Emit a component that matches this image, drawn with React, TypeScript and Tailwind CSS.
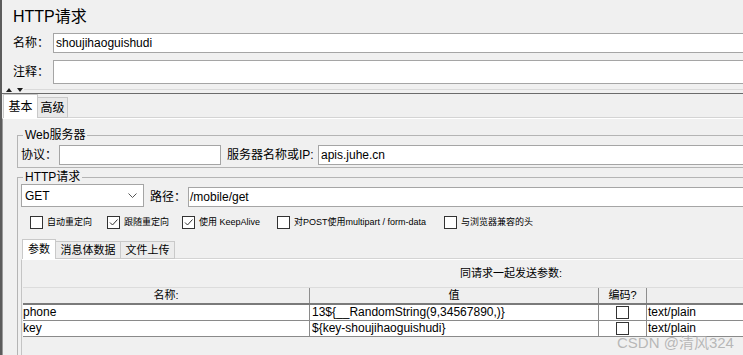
import React from 'react'

const FONT = "font-['Liberation_Sans','Noto_Sans_CJK_SC',sans-serif]"

function CheckBox({ checked = false }: { checked?: boolean }) {
  return (
    <span className="w-[13px] h-[13px] border border-[#333333] bg-white flex items-center justify-center shrink-0">
      {checked && (
        <svg width="11" height="11" viewBox="0 0 11 11">
          <polyline points="2,5.5 4.5,8 9.5,2.5" fill="none" stroke="#333333" strokeWidth="1" />
        </svg>
      )}
    </span>
  )
}

function Option({ label, checked, width }: { label: string; checked?: boolean; width: string }) {
  return (
    <div className={`flex items-center gap-[4px] ${width}`}>
      <CheckBox checked={checked} />
      <span className="text-[9px] leading-[13px] whitespace-nowrap">{label}</span>
    </div>
  )
}

const rows = [
  { name: 'phone', value: '13${__RandomString(9,34567890,)}', type: 'text/plain' },
  { name: 'key', value: '${key-shoujihaoguishudi}', type: 'text/plain' },
]

export default function App() {
  return (
    <div className={`relative w-[743px] h-[355px] overflow-hidden bg-[#f0f0f0] border-l-2 border-[#5c5c5c] text-black ${FONT}`}>
      <div className="w-[790px]">
        {/* Title */}
        <div className="h-[33px] pl-[11px] pt-[7px] text-[16px] leading-[20px]">HTTP请求</div>

        {/* 名称 */}
        <div className="flex items-center h-[20px]">
          <span className="w-[51px] pl-[11px] text-[12px]">名称：</span>
          <div className="flex-1 h-[20px] border border-[#a5a5a5] bg-white px-[2px] text-[12px] leading-[18px]">shoujihaoguishudi</div>
        </div>

        {/* 注释 */}
        <div className="flex items-center h-[24px] mt-[7px]">
          <span className="w-[51px] pl-[11px] text-[12px]">注释：</span>
          <div className="flex-1 h-[24px] border border-[#a5a5a5] bg-white" />
        </div>

        {/* split divider */}
        <div className="relative h-[9px]">
          <div className="absolute left-[22px] right-0 top-[5px] h-px bg-[#dadada]" />
          <svg className="absolute left-[3px] top-[4px]" width="20" height="4" viewBox="0 0 20 4">
            <polygon points="1,4 4,0 7,4" fill="#1a1a1a" />
            <polygon points="12,0 18,0 15,4" fill="#1a1a1a" />
          </svg>
        </div>
        <div className="h-px bg-[#6b6b6b]" />

        {/* main tabs */}
        <div className="flex items-end h-[24px]">
          <div className="ml-[1px] w-[35px] h-[24px] bg-white border border-b-0 border-[#c9c9c9] flex items-center justify-center text-[12px]">基本</div>
          <div className="w-[30px] h-[21px] bg-[#e9e9e9] border border-l-0 border-[#c9c9c9] flex items-center justify-center text-[12px]">高级</div>
          <div className="flex-1 h-full border-b border-[#d4d4d4]" />
        </div>

        {/* main panel */}
        <div className="border-l border-t border-l-[#9a9a9a] border-t-white pl-[14px] h-[240px]">
          {/* Web服务器 */}
          <fieldset className="mt-[9px] border border-[#b4b4b4] pl-[3px] pt-[3px] pb-[2px]">
            <legend className="ml-[2px] px-[2px] text-[12px] leading-[14px]">Web服务器</legend>
            <div className="flex items-center h-[20px]">
              <span className="w-[38px] text-[12px]">协议：</span>
              <div className="w-[162px] h-[20px] border border-[#a5a5a5] bg-white" />
              <span className="ml-[6px] w-[91px] text-[12px] whitespace-nowrap">服务器名称或IP:</span>
              <div className="flex-1 h-[20px] border border-[#a5a5a5] bg-white px-[2px] text-[12px] leading-[18px]">apis.juhe.cn</div>
            </div>
          </fieldset>

          {/* HTTP请求 */}
          <fieldset className="mt-[2px] border border-[#b4b4b4] pl-[3px] h-[200px]">
            <legend className="ml-[2px] px-[2px] text-[12px] leading-[14px]">HTTP请求</legend>
            <div className="flex items-start h-[23px]">
              <div className="w-[123px] h-[23px] border border-[#a5a5a5] bg-white flex items-center justify-between pl-[3px] pr-[6px] text-[12px]">
                <span>GET</span>
                <svg width="9" height="5" viewBox="0 0 9 5">
                  <polyline points="0.5,0.5 4.5,4.5 8.5,0.5" fill="none" stroke="#555555" strokeWidth="1" />
                </svg>
              </div>
              <span className="ml-[6px] w-[38px] mt-[4px] text-[12px]">路径：</span>
              <div className="flex-1 mt-[3px] h-[20px] border border-[#a5a5a5] bg-white px-[1px] text-[12px] leading-[18px]">/mobile/get</div>
            </div>

            {/* options */}
            <div className="flex items-center h-[13px] mt-[9px] pl-[9px]">
              <Option width="w-[77px]" label="自动重定向" />
              <Option width="w-[75px]" label="跟随重定向" checked />
              <Option width="w-[95px]" label="使用 KeepAlive" checked />
              <Option width="w-[167px]" label="对POST使用multipart / form-data" />
              <Option width="w-[120px]" label="与浏览器兼容的头" />
            </div>

            {/* sub tabs */}
            <div className="flex items-end h-[20px] mt-[10px]">
              <div className="ml-[1px] w-[34px] h-[20px] bg-white border border-b-0 border-[#c9c9c9] flex items-center justify-center text-[11px]">参数</div>
              <div className="w-[65px] h-[18px] bg-[#ececec] border border-l-0 border-[#c9c9c9] flex items-center justify-center text-[11px]">消息体数据</div>
              <div className="w-[54px] h-[18px] bg-[#ececec] border border-l-0 border-[#c9c9c9] flex items-center justify-center text-[11px]">文件上传</div>
              <div className="flex-1 h-full border-b border-[#d4d4d4]" />
            </div>

            <div className="border-l border-t border-l-[#c4c4c4] border-t-white pl-[1px] h-[100px]">
              <div className="h-[27px] w-[976px] flex items-center justify-center text-[11px]">同请求一起发送参数:</div>

              {/* table */}
              <div className="w-[976px] text-[12px]">
                <div className="flex h-[18px] bg-[#efefef] border-t border-[#dcdcdc] border-b-2 border-b-[#7a7a7a] text-[11px]">
                  <div className="w-[287px] border-r border-[#8e8e8e] flex items-center justify-center">名称:</div>
                  <div className="w-[289px] border-r border-[#8e8e8e] flex items-center justify-center">值</div>
                  <div className="w-[48px] border-r border-[#8e8e8e] flex items-center justify-center">编码?</div>
                  <div className="flex-1" />
                </div>
                {rows.map((r) => (
                  <div key={r.name} className="flex h-[16px] bg-white border-b border-[#8a8a8a] leading-[15px]">
                    <div className="w-[287px] border-r border-[#8a8a8a] whitespace-nowrap">{r.name}</div>
                    <div className="w-[289px] border-r border-[#8a8a8a] pl-[2px] whitespace-nowrap">{r.value}</div>
                    <div className="w-[48px] border-r border-[#8a8a8a] flex items-center justify-center">
                      <CheckBox />
                    </div>
                    <div className="flex-1 pl-[1px] whitespace-nowrap">{r.type}</div>
                  </div>
                ))}
              </div>
            </div>
          </fieldset>
        </div>
      </div>

      {/* watermark */}
      <div className="absolute left-[615px] top-[334px] text-[15px] leading-[18px] text-[#a8a8a8]/80 whitespace-nowrap">CSDN @清风324</div>
    </div>
  )
}
